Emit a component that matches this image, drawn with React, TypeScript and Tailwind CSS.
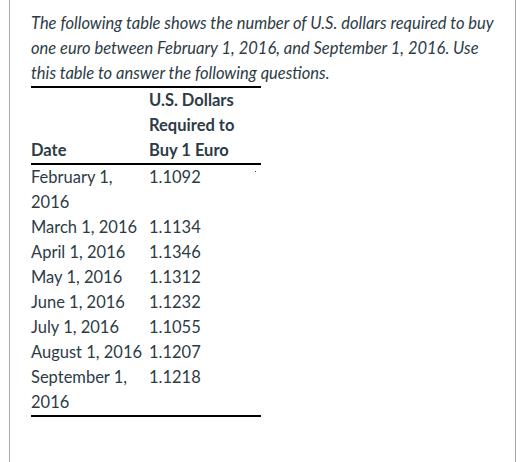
const rows: [string, string][] = [
  ["February 1, 2016", "1.1092"],
  ["March 1, 2016", "1.1134"],
  ["April 1, 2016", "1.1346"],
  ["May 1, 2016", "1.1312"],
  ["June 1, 2016", "1.1232"],
  ["July 1, 2016", "1.1055"],
  ["August 1, 2016", "1.1207"],
  ["September 1, 2016", "1.1218"],
]

export default function App() {
  return (
    <div className="h-[462px] w-[526px] overflow-hidden bg-white pl-[9px] pr-[10px] font-['Lato',sans-serif] text-[16.5px] leading-[25px] text-[#2d3b45]">
      <div className="h-full border-x border-[#a8a8a8] pl-[21px] pr-5 pt-[11px]">
        <p className="italic">
          The following table shows the number of U.S. dollars required to buy
          one euro between February 1, 2016, and September 1, 2016. Use this
          table to answer the following questions.
        </p>
        <div className="relative w-[230px]">
          <table className="w-[230px] table-fixed border-collapse border-y-2 border-black">
            <colgroup>
              <col className="w-[118px]" />
              <col className="w-[112px]" />
            </colgroup>
            <thead>
              <tr className="border-b-2 border-black">
                <th className="p-0 text-left align-bottom font-bold">Date</th>
                <th className="p-0 text-left align-bottom font-bold">
                  U.S. Dollars Required to Buy 1 Euro
                </th>
              </tr>
            </thead>
            <tbody>
              {rows.map(([date, value]) => (
                <tr key={date}>
                  <td className="p-0 align-top">{date}</td>
                  <td className="p-0 align-top">{value}</td>
                </tr>
              ))}
            </tbody>
          </table>
          <span className="absolute left-[224px] top-[85px] h-px w-px bg-[#2020e0]" />
        </div>
      </div>
    </div>
  )
}
